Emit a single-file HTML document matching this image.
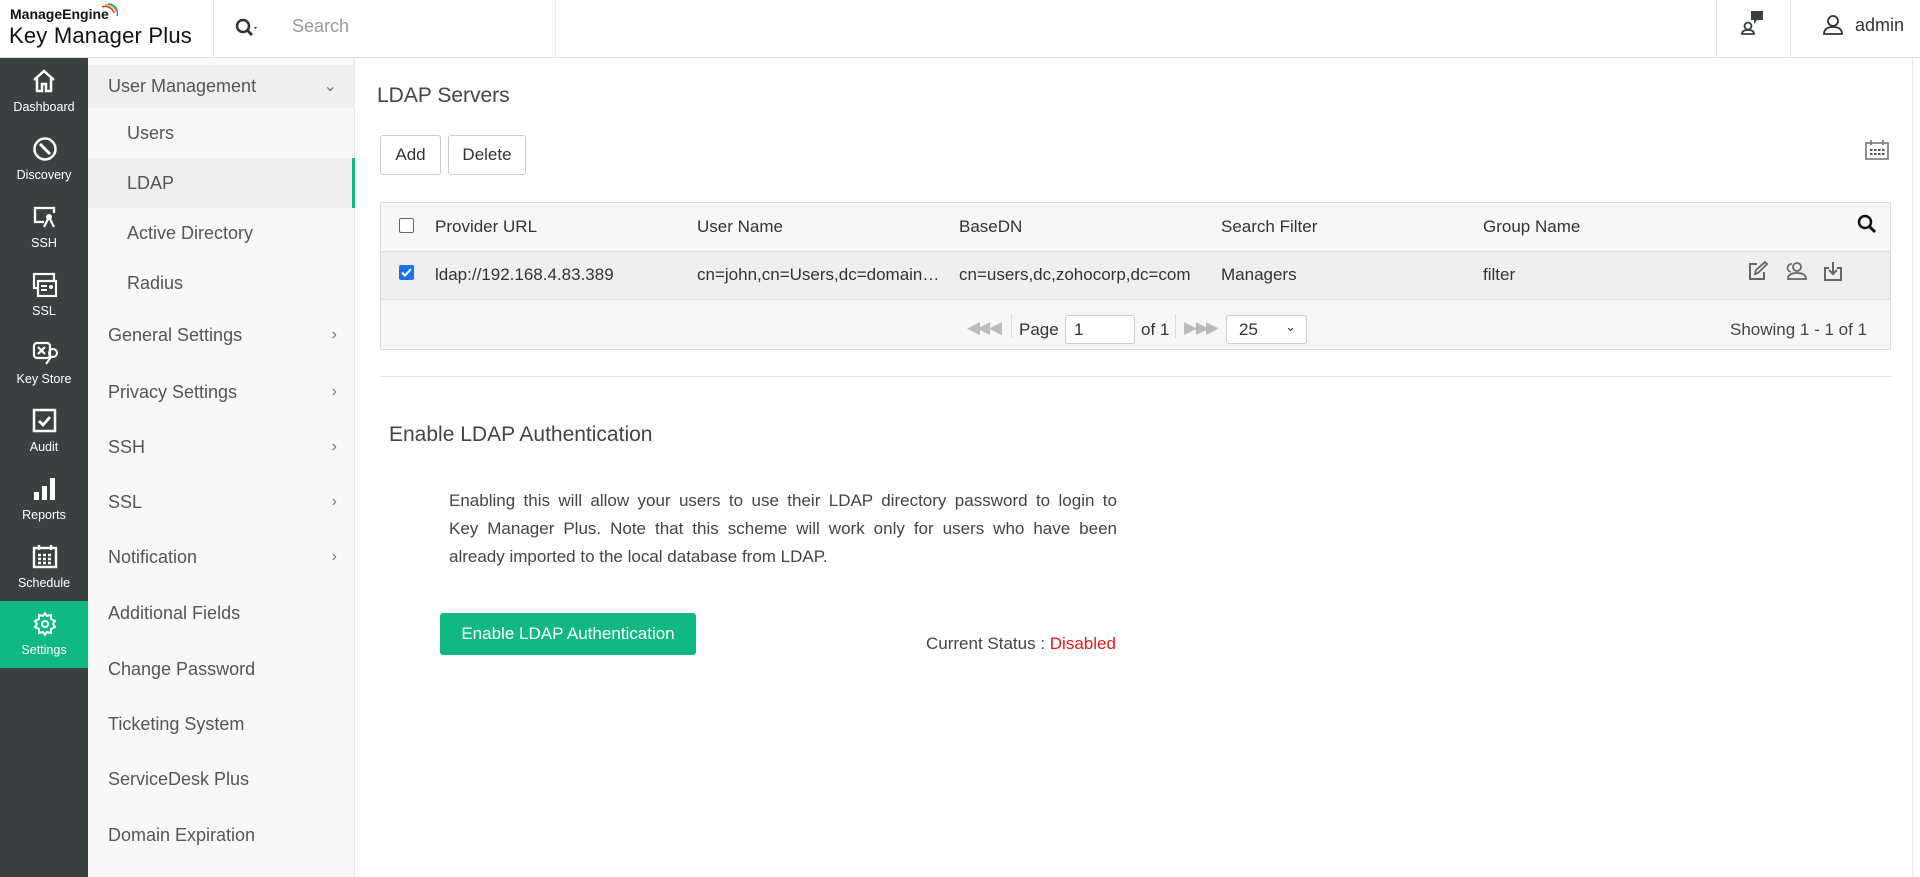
<!DOCTYPE html>
<html><head><meta charset="utf-8"><style>
*{box-sizing:border-box;margin:0;padding:0}
body{width:1920px;height:877px;overflow:hidden;font-family:"Liberation Sans",sans-serif;background:#fff;color:#333;position:relative}
.abs{position:absolute}
#hdr{left:0;top:0;width:1920px;height:58px;border-bottom:1px solid #e2e2e2;background:#fff}
#rail{left:0;top:58px;width:88px;height:819px;background:#394240}
.ri{position:absolute;left:0;width:88px;height:68px;color:#fff;font-size:12.5px;text-align:center}
.ri svg{position:absolute;left:32px;top:10px}
.ri span{position:absolute;left:0;right:0;top:42px}
#sub{left:88px;top:58px;width:267px;height:819px;background:#f8f8f8;border-right:1px solid #e5e5e5}
.si{position:absolute;left:0;width:267px;font-size:18px;color:#555;height:50px;line-height:50px;padding-left:20px}
.si .ch{position:absolute;right:18px;top:0;color:#777;font-size:16px}
.ss{padding-left:39px}
.tx{position:absolute;font-size:17px;color:#333;white-space:nowrap}
.pl{text-align:justify;text-align-last:justify;white-space:nowrap}
</style></head><body>
<div id="hdr" class="abs">
 <div class="abs" style="left:10px;top:6px;font-size:14px;font-weight:bold;color:#111">ManageEngine</div>
 <svg class="abs" style="left:100px;top:3px" width="18" height="16"><path d="M2 4 A9 9 0 0 1 14 10" stroke="#e6332a" stroke-width="1.5" fill="none"/><path d="M5 2 A9 9 0 0 1 16 9" stroke="#f6a800" stroke-width="1.5" fill="none"/><path d="M8 1 A9 9 0 0 1 17 13" stroke="#00a1e0" stroke-width="1.5" fill="none"/></svg>
 <div class="abs" style="left:9px;top:23px;font-size:22px;color:#111;letter-spacing:0.2px">Key Manager Plus</div>
 <div class="abs" style="left:213px;top:0;width:1px;height:58px;background:#e5e5e5"></div>
 <svg class="abs" style="left:235px;top:18px" width="26" height="20"><circle cx="8" cy="8" r="6" stroke="#333" stroke-width="2.5" fill="none"/><path d="M12 12 L17 17" stroke="#333" stroke-width="2.8"/><path d="M19 9 L22 9 L20.5 11Z" fill="#333"/></svg>
 <div class="abs" style="left:292px;top:16px;font-size:18px;color:#999">Search</div>
 <div class="abs" style="left:555px;top:0;width:1px;height:58px;background:#eee"></div>
 <div class="abs" style="left:1716px;top:0;width:1px;height:58px;background:#e5e5e5"></div>
 <div class="abs" style="left:1790px;top:0;width:1px;height:58px;background:#e5e5e5"></div>
 <svg class="abs" style="left:1740px;top:10px" width="26" height="26"><rect x="11" y="1" width="12" height="9" fill="#394240"/><path d="M14 10 L14 14 L17 10Z" fill="#394240"/><circle cx="8" cy="16" r="3.5" stroke="#394240" stroke-width="1.8" fill="none"/><path d="M2 24 Q2 20 8 20 Q14 20 14 24Z" stroke="#394240" stroke-width="1.8" fill="none"/></svg>
 <svg class="abs" style="left:1822px;top:14px" width="22" height="22"><circle cx="11" cy="7" r="5" stroke="#333" stroke-width="1.8" fill="none"/><path d="M2 20 Q2 13 11 13 Q20 13 20 20Z" stroke="#333" stroke-width="1.8" fill="none"/></svg>
 <div class="abs" style="left:1855px;top:15px;font-size:18px;color:#333">admin</div>
</div>
<div id="rail" class="abs">
 <div class="ri" style="top:0"><svg width="24" height="26"><path d="M2 12 L12 3 L22 12 M5 10 V23 H10 V16 H14 V23 H19 V10" stroke="#fff" stroke-width="2.5" fill="none"/></svg><span>Dashboard</span></div>
 <div class="ri" style="top:68px"><svg width="26" height="26"><circle cx="13" cy="13" r="10.5" stroke="#fff" stroke-width="2.5" fill="none"/><path d="M8 8 L18 18" stroke="#fff" stroke-width="3"/></svg><span>Discovery</span></div>
 <div class="ri" style="top:136px"><svg width="26" height="26"><path d="M12 18 H3 V4 H22 V9" stroke="#fff" stroke-width="2.3" fill="none"/><circle cx="17" cy="13" r="3" fill="#fff"/><path d="M16 15 L12 23 M18 15 L22 23" stroke="#fff" stroke-width="2.2"/></svg><span>SSH</span></div>
 <div class="ri" style="top:204px"><svg width="26" height="26"><rect x="2" y="2" width="20" height="14" stroke="#fff" stroke-width="2.2" fill="none"/><rect x="6" y="9" width="18" height="15" stroke="#fff" stroke-width="2.2" fill="#394240"/><path d="M9 14 H15 M9 18 H15" stroke="#fff" stroke-width="2"/><circle cx="19" cy="15" r="2" fill="#fff"/></svg><span>SSL</span></div>
 <div class="ri" style="top:272px"><svg width="28" height="26"><rect x="2" y="3" width="16" height="15" rx="3" stroke="#fff" stroke-width="2.2" fill="none"/><path d="M6 7 L13 14 M13 7 L6 14" stroke="#fff" stroke-width="2.2"/><circle cx="21" cy="13" r="4" stroke="#fff" stroke-width="2" fill="none"/><path d="M19 17 L14 24" stroke="#fff" stroke-width="2"/></svg><span>Key Store</span></div>
 <div class="ri" style="top:340px"><svg width="26" height="26"><rect x="2" y="2" width="21" height="21" stroke="#fff" stroke-width="2.5" fill="none"/><path d="M7 13 L11 17 L18 9" stroke="#fff" stroke-width="2.8" fill="none"/></svg><span>Audit</span></div>
 <div class="ri" style="top:408px"><svg width="26" height="26"><rect x="2" y="16" width="5" height="8" fill="#fff"/><rect x="10" y="10" width="5" height="14" fill="#fff"/><rect x="18" y="2" width="5" height="22" fill="#fff"/></svg><span>Reports</span></div>
 <div class="ri" style="top:476px"><svg width="26" height="26"><rect x="2" y="4" width="22" height="19" stroke="#fff" stroke-width="2.4" fill="none"/><path d="M7 1 V6 M19 1 V6" stroke="#fff" stroke-width="2.4"/><path d="M6 11 H20 M6 15 H20 M6 19 H20" stroke="#fff" stroke-width="2.5" stroke-dasharray="3 2"/></svg><span>Schedule</span></div>
 <div class="ri" style="top:543px;height:67px;background:#11b882"><svg width="26" height="26"><path d="M13 2 L15 5 L19 4 L19 8 L23 10 L21 13 L23 16 L19 18 L19 22 L15 21 L13 24 L11 21 L7 22 L7 18 L3 16 L5 13 L3 10 L7 8 L7 4 L11 5Z" stroke="#fff" stroke-width="2" fill="none"/><circle cx="13" cy="13" r="3" stroke="#fff" stroke-width="2" fill="none"/></svg><span>Settings</span></div>
</div>
<div id="sub" class="abs">
 <div class="si" style="top:7px;height:43px;line-height:43px;background:#efefef">User Management<span class="ch">&#8964;</span></div>
 <div class="si ss" style="top:50px">Users</div>
 <div class="si ss" style="top:100px;background:#efefef;border-right:3px solid #11b882">LDAP</div>
 <div class="si ss" style="top:150px">Active Directory</div>
 <div class="si ss" style="top:200px">Radius</div>
 <div class="si" style="top:252px">General Settings<span class="ch">&#8250;</span></div>
 <div class="si" style="top:309px">Privacy Settings<span class="ch">&#8250;</span></div>
 <div class="si" style="top:364px">SSH<span class="ch">&#8250;</span></div>
 <div class="si" style="top:419px">SSL<span class="ch">&#8250;</span></div>
 <div class="si" style="top:474px">Notification<span class="ch">&#8250;</span></div>
 <div class="si" style="top:530px">Additional Fields</div>
 <div class="si" style="top:586px">Change Password</div>
 <div class="si" style="top:641px">Ticketing System</div>
 <div class="si" style="top:696px">ServiceDesk Plus</div>
 <div class="si" style="top:752px">Domain Expiration</div>
</div>
<div class="abs" style="left:1912px;top:58px;width:1px;height:819px;background:#e8e8e8"></div>
<div class="tx" style="left:377px;top:84px;font-size:21px;color:#444">LDAP Servers</div>
<div class="abs" style="left:380px;top:135px;width:61px;height:40px;border:1px solid #ccc;border-radius:3px;font-size:17px;text-align:center;line-height:38px">Add</div>
<div class="abs" style="left:448px;top:135px;width:78px;height:40px;border:1px solid #ccc;border-radius:3px;font-size:17px;text-align:center;line-height:38px">Delete</div>
<svg class="abs" style="left:1865px;top:140px" width="24" height="20"><rect x="1" y="3" width="22" height="16" stroke="#777" stroke-width="1.6" fill="none"/><path d="M6 0 V5 M18 0 V5" stroke="#777" stroke-width="1.6"/><path d="M5 10 H20 M5 14 H20" stroke="#555" stroke-width="2" stroke-dasharray="2.5 1.5"/></svg>
<div class="abs" style="left:380px;top:202px;width:1511px;height:148px;border:1px solid #ddd;background:#f7f7f7"></div>
<div class="abs" style="left:381px;top:251px;width:1509px;height:49px;background:#efefef;border-top:1px solid #ddd;border-bottom:1px solid #ddd"></div>
<div class="abs" style="left:399px;top:218px;width:15px;height:15px;border:1px solid #666;border-radius:2px;background:#fff"></div>
<div class="tx" style="left:435px;top:217px">Provider URL</div>
<div class="tx" style="left:697px;top:217px">User Name</div>
<div class="tx" style="left:959px;top:217px">BaseDN</div>
<div class="tx" style="left:1221px;top:217px">Search Filter</div>
<div class="tx" style="left:1483px;top:217px">Group Name</div>
<svg class="abs" style="left:1857px;top:214px" width="20" height="20"><circle cx="8" cy="8" r="6" stroke="#111" stroke-width="2.5" fill="none"/><path d="M12 12 L18 18" stroke="#111" stroke-width="3"/></svg>
<div class="abs" style="left:399px;top:265px;width:15px;height:15px;border-radius:2px;background:#1a73e8"><svg width="15" height="15"><path d="M3 7.5 L6 10.5 L12 4" stroke="#fff" stroke-width="2" fill="none"/></svg></div>
<div class="tx" style="left:435px;top:265px">ldap://192.168.4.83.389</div>
<div class="tx" style="left:697px;top:265px">cn=john,cn=Users,dc=domain…</div>
<div class="tx" style="left:959px;top:265px">cn=users,dc,zohocorp,dc=com</div>
<div class="tx" style="left:1221px;top:265px">Managers</div>
<div class="tx" style="left:1483px;top:265px">filter</div>
<svg class="abs" style="left:1747px;top:260px" width="22" height="22"><path d="M10 4 H3 V19 H17 V12" stroke="#666" stroke-width="2" fill="none"/><path d="M8 14 L9 10 L18 2 L20 4 L11 13Z" stroke="#666" stroke-width="1.8" fill="none"/></svg>
<svg class="abs" style="left:1784px;top:261px" width="24" height="20"><circle cx="13" cy="6" r="4" stroke="#666" stroke-width="1.8" fill="none"/><path d="M4 18 Q4 12 13 12 Q22 12 22 18Z" stroke="#666" stroke-width="1.8" fill="none"/><path d="M8 3 A4 4 0 0 0 7 11" stroke="#666" stroke-width="1.6" fill="none"/></svg>
<svg class="abs" style="left:1823px;top:260px" width="20" height="22"><path d="M6 8 H2 V20 H18 V8 H14" stroke="#666" stroke-width="2" fill="none"/><path d="M10 2 V14 M6 10 L10 14 L14 10" stroke="#666" stroke-width="2" fill="none"/></svg>
<div class="tx" style="left:967px;top:318px;color:#bbb;font-size:17px;letter-spacing:-3px">◀◀ ◀</div>
<div class="abs" style="left:1011px;top:314px;width:1px;height:24px;background:#ddd"></div>
<div class="tx" style="left:1019px;top:320px">Page</div>
<div class="abs" style="left:1065px;top:315px;width:70px;height:29px;border:1px solid #ccc;border-radius:3px;background:#fff;font-size:17px;padding:4px 8px">1</div>
<div class="tx" style="left:1141px;top:320px">of 1</div>
<div class="abs" style="left:1175px;top:314px;width:1px;height:24px;background:#ddd"></div>
<div class="tx" style="left:1184px;top:318px;color:#bbb;font-size:17px;letter-spacing:-3px">▶ ▶▶</div>
<div class="abs" style="left:1226px;top:315px;width:81px;height:29px;border:1px solid #ccc;border-radius:3px;background:#fff;font-size:17px;padding:4px 12px">25<span style="position:absolute;right:10px;top:3px;font-size:13px">&#8964;</span></div>
<div class="tx" style="left:1730px;top:320px;color:#444">Showing 1 - 1 of 1</div>
<div class="abs" style="left:380px;top:376px;width:1511px;height:1px;background:#e5e5e5"></div>
<div class="tx" style="left:389px;top:423px;font-size:21px;color:#444">Enable LDAP Authentication</div>
<div class="abs" style="left:449px;top:487px;width:668px;font-size:17px;line-height:28px;color:#444">
 <div class="pl">Enabling this will allow your users to use their LDAP directory password to login to</div>
 <div class="pl">Key Manager Plus. Note that this scheme will work only for users who have been</div>
 <div style="white-space:nowrap">already imported to the local database from LDAP.</div>
</div>
<div class="abs" style="left:440px;top:613px;width:256px;height:42px;background:#11b882;border-radius:3px;color:#fff;font-size:17px;text-align:center;line-height:42px">Enable LDAP Authentication</div>
<div class="tx" style="left:926px;top:634px;color:#444">Current Status : <span style="color:#e01b1b">Disabled</span></div>
</body></html>
